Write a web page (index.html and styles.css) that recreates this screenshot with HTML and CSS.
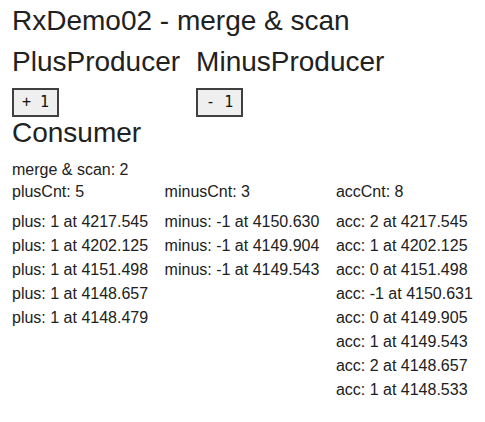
FILE: index.html
```html
<!DOCTYPE html>
<html>
<head>
<meta charset="utf-8">
<title>RxDemo02</title>
<link rel="stylesheet" href="styles.css">
</head>
<body>
<div class="page">
  <h1 class="title">RxDemo02 - merge &amp; scan</h1>
  <div class="producers">
    <div class="producer">
      <h2 class="heading">PlusProducer</h2>
      <button class="btn">+ 1</button>
    </div>
    <div class="producer">
      <h2 class="heading">MinusProducer</h2>
      <button class="btn">- 1</button>
    </div>
  </div>
  <div class="consumer">
    <h2 class="heading">Consumer</h2>
    <div class="merge">merge &amp; scan: 2</div>
    <div class="grid">
      <div class="cnt">plusCnt: 5</div>
      <div class="cnt">minusCnt: 3</div>
      <div class="cnt">accCnt: 8</div>
      <div class="list">
        <div class="item">plus: 1 at 4217.545</div>
        <div class="item">plus: 1 at 4202.125</div>
        <div class="item">plus: 1 at 4151.498</div>
        <div class="item">plus: 1 at 4148.657</div>
        <div class="item">plus: 1 at 4148.479</div>
      </div>
      <div class="list">
        <div class="item">minus: -1 at 4150.630</div>
        <div class="item">minus: -1 at 4149.904</div>
        <div class="item">minus: -1 at 4149.543</div>
      </div>
      <div class="list">
        <div class="item">acc: 2 at 4217.545</div>
        <div class="item">acc: 1 at 4202.125</div>
        <div class="item">acc: 0 at 4151.498</div>
        <div class="item">acc: -1 at 4150.631</div>
        <div class="item">acc: 0 at 4149.905</div>
        <div class="item">acc: 1 at 4149.543</div>
        <div class="item">acc: 2 at 4148.657</div>
        <div class="item">acc: 1 at 4148.533</div>
      </div>
    </div>
  </div>
</div>
</body>
</html>
```

FILE: styles.css
```css
html, body {
  margin: 0;
  padding: 0;
  background: #ffffff;
}

body {
  font-family: "Liberation Sans", Arial, sans-serif;
  font-size: 16px;
  color: #212121;
}

.page {
  padding: 5px 12px 0 12px;
}

.title,
.heading {
  margin: 0;
  font-size: 28px;
  font-weight: normal;
  line-height: 32px;
}

.producers {
  display: flex;
  gap: 16px;
  margin-top: 9px;
}

.producer {
  display: flex;
  flex-direction: column;
  align-items: flex-start;
  gap: 10px;
}

.btn {
  font-family: "DejaVu Sans Mono", "Liberation Mono", monospace;
  font-size: 15px;
  line-height: 17px;
  padding: 4px 8px;
  border: 2px solid #404040;
  background: #efefef;
  color: #111111;
  border-radius: 0;
}

.merge {
  margin-top: 10px;
  line-height: 22px;
}

.grid {
  display: grid;
  grid-template-columns: auto auto auto;
  justify-content: start;
  column-gap: 16.5px;
}

.cnt {
  line-height: 22px;
}

.list {
  margin-top: 6.5px;
}

.item {
  line-height: 24px;
  white-space: nowrap;
}
```
